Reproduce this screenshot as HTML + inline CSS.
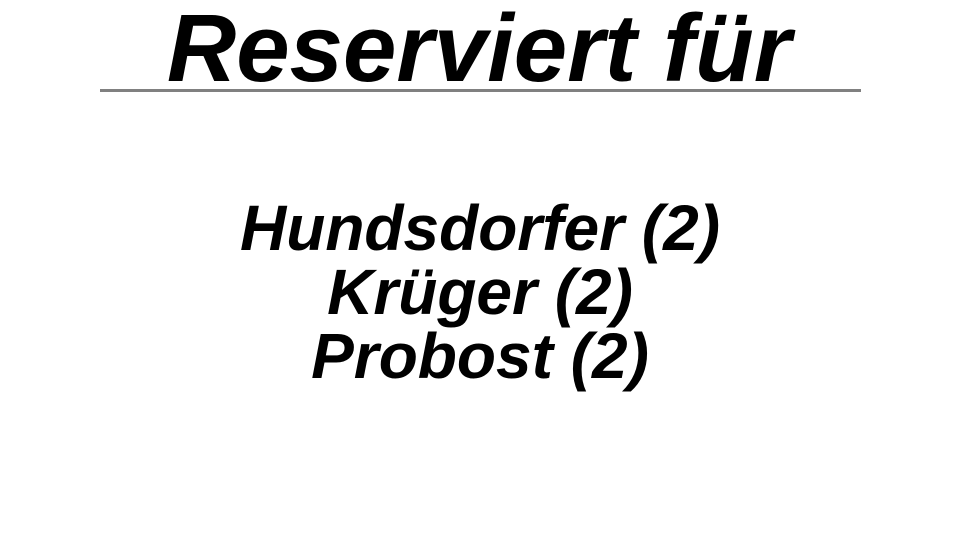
<!DOCTYPE html>
<html><head><meta charset="utf-8"><style>
html,body{margin:0;padding:0;background:#fff;width:960px;height:540px;overflow:hidden}
body{position:relative;font-family:"Liberation Sans",sans-serif;font-weight:bold;font-style:italic;color:#000}
.t{position:absolute;left:0;width:960px;text-align:center;top:1px;font-size:96px;line-height:96px;padding-right:2px;box-sizing:border-box}
.line{position:absolute;left:100px;top:89px;width:761px;height:3px;background:#808080}
.n{position:absolute;left:0;width:960px;text-align:center;top:196px;font-size:64px;line-height:64px}
</style></head><body>
<div class="t">Reserviert für</div>
<div class="line"></div>
<div class="n">Hundsdorfer (2)<br>Krüger (2)<br>Probost (2)</div>
</body></html>
